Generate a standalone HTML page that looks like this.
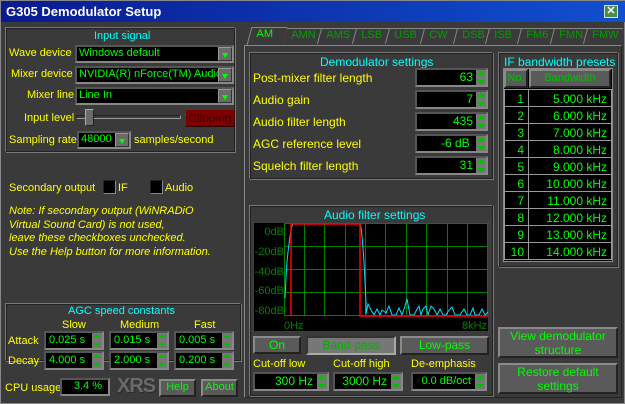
<!DOCTYPE html>
<html><head><meta charset="utf-8"><style>
*{box-sizing:border-box;margin:0;padding:0}
body{width:625px;height:404px;background:#3a3a3a;font-family:"Liberation Sans",sans-serif;font-size:11px;position:relative;overflow:hidden;border:1px solid #888}
.a{position:absolute;white-space:nowrap}
.y{color:#ffff00}.c{color:#00ffff}.g{color:#00ff00}
.box{position:absolute;border:1px solid #777;border-right-color:#222;border-bottom-color:#222;box-shadow:inset 1px 1px 0 #222,1px 1px 0 #777}
.blk{position:absolute;background:#000;border:2px solid #555;border-right-color:#888;border-bottom-color:#888;color:#00ff00;font-size:11px;line-height:13px;white-space:nowrap;overflow:hidden}
.dd{position:absolute;right:0;top:0;width:14px;height:100%;background:#6a6a6a;border:1px solid #999;border-right-color:#333;border-bottom-color:#333}
.dd:after{content:"";position:absolute;left:3px;top:5px;border-left:3px solid transparent;border-right:3px solid transparent;border-top:5px solid #00ff00}
.sp{position:absolute;right:0;top:0;width:10px;height:100%;background:#777}
.sp:before{content:"";position:absolute;left:1px;top:1px;border-left:4px solid transparent;border-right:4px solid transparent;border-bottom:4px solid #00c000}
.sp:after{content:"";position:absolute;left:1px;bottom:1px;border-left:4px solid transparent;border-right:4px solid transparent;border-top:4px solid #00c000}
.btn{position:absolute;background:#5a5a5a;border:2px solid #8a8a8a;border-right-color:#222;border-bottom-color:#222;color:#00ff00;text-align:center;font-size:12px}
.tab{position:absolute;top:27px;height:16px;color:#00a000;font-size:11px;padding-left:6px;border-top:1px solid #888;border-left:1px solid #888;transform:skewX(-15deg);white-space:nowrap}
.tab span{display:inline-block;transform:skewX(15deg)}
.r{text-align:right;padding-right:13px}
</style></head><body>
<div class="a" style="left:0;top:0;width:625px;height:21px;background:linear-gradient(90deg,#0a1a90,#1050d0);color:#fff;font-weight:bold;font-size:13px;line-height:21px;padding-left:5px">G305 Demodulator Setup</div>
<div class="a" style="left:603px;top:4px;width:14px;height:13px;background:#4a8a4a;border:1px solid #ddd;color:#fff;font-size:11px;line-height:11px;text-align:center;font-weight:bold">✕</div>

<div class="box" style="left:4px;top:26px;width:230px;height:125px"></div>
<div class="a c" style="left:93px;top:29px">Input signal</div>
<div class="a y" style="left:8px;top:46px">Wave device</div>
<div class="blk" style="left:74px;top:44px;width:159px;height:18px;padding-left:2px">Windows default<div class="dd"></div></div>
<div class="a y" style="left:10px;top:67px">Mixer device</div>
<div class="blk" style="left:74px;top:65px;width:159px;height:18px;padding-left:2px">NVIDIA(R) nForce(TM) Audio<div class="dd"></div></div>
<div class="a y" style="left:26px;top:88px">Mixer line</div>
<div class="blk" style="left:74px;top:86px;width:159px;height:18px;padding-left:2px">Line In<div class="dd"></div></div>
<div class="a y" style="left:23px;top:111px">Input level</div>
<div class="a" style="left:75px;top:114px;width:105px;height:4px;border:1px solid #222;border-right-color:#999;border-bottom-color:#999"></div>
<div class="a" style="left:84px;top:108px;width:9px;height:17px;background:#6a6a6a;border:1px solid #aaa;border-right-color:#222;border-bottom-color:#222"></div>
<div class="a" style="left:184px;top:108px;width:50px;height:18px;background:#800000;border:1px solid #c00;border-right-color:#300;border-bottom-color:#300;color:#400;font-size:12px;text-align:center;line-height:16px">Clipping</div>
<div class="a y" style="left:8px;top:133px">Sampling rate</div>
<div class="blk" style="left:76px;top:130px;width:54px;height:18px;padding-left:2px">48000<div class="dd"></div></div>
<div class="a y" style="left:133px;top:133px">samples/second</div>

<div class="a y" style="left:8px;top:181px">Secondary output</div>
<div class="a" style="left:102px;top:179px;width:13px;height:14px;background:#000;border:1px solid #888;border-top-color:#222;border-left-color:#222"></div>
<div class="a y" style="left:117px;top:181px">IF</div>
<div class="a" style="left:149px;top:179px;width:13px;height:14px;background:#000;border:1px solid #888;border-top-color:#222;border-left-color:#222"></div>
<div class="a y" style="left:164px;top:181px">Audio</div>
<div class="a y" style="left:8px;top:204px;font-style:italic;line-height:13.5px;font-size:11px">Note: If secondary output (WiNRADiO<br>Virtual Sound Card) is not used,<br>leave these checkboxes unchecked.<br>Use the Help button for more information.</div>

<div class="box" style="left:4px;top:302px;width:236px;height:58px"></div>
<div class="a c" style="left:67px;top:304px">AGC speed constants</div>
<div class="a y" style="left:61px;top:318px">Slow</div>
<div class="a y" style="left:119px;top:318px">Medium</div>
<div class="a y" style="left:193px;top:318px">Fast</div>
<div class="a y" style="left:7px;top:334px">Attack</div>
<div class="a y" style="left:7px;top:354px">Decay</div>
<div class="blk" style="left:43px;top:330px;width:60px;height:19px;padding:1px 3px">0.025 s<div class="sp"></div></div>
<div class="blk" style="left:108px;top:330px;width:60px;height:19px;padding:1px 3px">0.015 s<div class="sp"></div></div>
<div class="blk" style="left:173px;top:330px;width:60px;height:19px;padding:1px 3px">0.005 s<div class="sp"></div></div>
<div class="blk" style="left:43px;top:350px;width:60px;height:19px;padding:1px 3px">4.000 s<div class="sp"></div></div>
<div class="blk" style="left:108px;top:350px;width:60px;height:19px;padding:1px 3px">2.000 s<div class="sp"></div></div>
<div class="blk" style="left:173px;top:350px;width:60px;height:19px;padding:1px 3px">0.200 s<div class="sp"></div></div>
<div class="a y" style="left:4px;top:381px">CPU usage</div>
<div class="blk" style="left:59px;top:377px;width:50px;height:18px;text-align:right;padding-right:6px">3.4 %</div>
<div class="a" style="left:116px;top:374px;color:#6a6a6a;font-size:20px;font-weight:bold;letter-spacing:-1px;text-shadow:1px 1px 0 #2a2a2a">XRS</div>
<div class="btn" style="left:158px;top:378px;width:37px;height:18px;line-height:13px;font-size:11px">Help</div>
<div class="btn" style="left:200px;top:378px;width:37px;height:18px;line-height:13px;font-size:11px">About</div>

<!-- tabs -->
<div class="a" style="left:243px;top:44px;width:378px;height:353px;border:1px solid #888;border-right-color:#222;border-bottom-color:#222"></div>
<div class="tab" style="left:248px;width:36px;top:26px;height:18px;color:#00ff00;background:#3a3a3a;z-index:2"><span>AM</span></div>
<div class="tab" style="left:283px;width:36px"><span>AMN</span></div>
<div class="tab" style="left:318px;width:36px"><span>AMS</span></div>
<div class="tab" style="left:353px;width:34px"><span>LSB</span></div>
<div class="tab" style="left:386px;width:36px"><span>USB</span></div>
<div class="tab" style="left:421px;width:34px"><span>CW</span></div>
<div class="tab" style="left:454px;width:33px"><span>DSB</span></div>
<div class="tab" style="left:486px;width:33px"><span>ISB</span></div>
<div class="tab" style="left:518px;width:34px"><span>FM6</span></div>
<div class="tab" style="left:551px;width:34px"><span>FMN</span></div>
<div class="tab" style="left:584px;width:36px"><span>FMW</span></div>

<div class="box" style="left:248px;top:51px;width:244px;height:127px"></div>
<div class="a c" style="left:319px;top:54px;font-size:12px">Demodulator settings</div>
<div class="a y" style="left:252px;top:70px;font-size:12px">Post-mixer filter length</div>
<div class="a y" style="left:252px;top:92px;font-size:12px">Audio gain</div>
<div class="a y" style="left:252px;top:114px;font-size:12px">Audio filter length</div>
<div class="a y" style="left:252px;top:136px;font-size:12px">AGC reference level</div>
<div class="a y" style="left:252px;top:158px;font-size:12px">Squelch filter length</div>
<div class="blk r" style="left:414px;top:67px;width:73px;height:19px;font-size:12px;line-height:15px">63<div class="sp"></div></div>
<div class="blk r" style="left:414px;top:89px;width:73px;height:19px;font-size:12px;line-height:15px">7<div class="sp"></div></div>
<div class="blk r" style="left:414px;top:111px;width:73px;height:19px;font-size:12px;line-height:15px">435<div class="sp"></div></div>
<div class="blk r" style="left:414px;top:133px;width:73px;height:19px;font-size:12px;line-height:15px">-6 dB&nbsp;<div class="sp"></div></div>
<div class="blk r" style="left:414px;top:155px;width:73px;height:19px;font-size:12px;line-height:15px">31<div class="sp"></div></div>

<div class="box" style="left:497px;top:51px;width:120px;height:215px"></div>
<div class="a c" style="left:503px;top:54px;font-size:12px">IF bandwidth presets</div>
<div class="a" style="left:502px;top:67px;width:110px;height:194px;background:#000;border:1px solid #888"></div>
<div class="btn" style="left:503px;top:68px;width:24px;height:19px;font-size:11px;line-height:15px;color:#00c000">No.</div>
<div class="btn" style="left:528px;top:68px;width:82px;height:19px;font-size:11px;line-height:15px;color:#00c000">Bandwidth</div>
<div class="a" style="left:503px;top:88px;width:108px">
<svg width="108" height="172" style="position:absolute;left:0;top:0">
<g stroke="#999" fill="none"><rect x="0.5" y="0.5" width="107" height="170"/><line x1="24.5" y1="0" x2="24.5" y2="171"/>
<line x1="0" y1="17.5" x2="108" y2="17.5"/><line x1="0" y1="34.5" x2="108" y2="34.5"/><line x1="0" y1="51.5" x2="108" y2="51.5"/><line x1="0" y1="68.5" x2="108" y2="68.5"/><line x1="0" y1="85.5" x2="108" y2="85.5"/><line x1="0" y1="102.5" x2="108" y2="102.5"/><line x1="0" y1="119.5" x2="108" y2="119.5"/><line x1="0" y1="136.5" x2="108" y2="136.5"/><line x1="0" y1="153.5" x2="108" y2="153.5"/></g>
<g fill="#00ff00" font-family="Liberation Sans" font-size="12" text-anchor="end">
<text x="20" y="14">1</text><text x="20" y="31">2</text><text x="20" y="48">3</text><text x="20" y="65">4</text><text x="20" y="82">5</text><text x="20" y="99">6</text><text x="20" y="116">7</text><text x="20" y="133">8</text><text x="20" y="150">9</text><text x="20" y="167">10</text>
<text x="103" y="14">5.000  kHz</text><text x="103" y="31">6.000  kHz</text><text x="103" y="48">7.000  kHz</text><text x="103" y="65">8.000  kHz</text><text x="103" y="82">9.000  kHz</text><text x="103" y="99">10.000  kHz</text><text x="103" y="116">11.000  kHz</text><text x="103" y="133">12.000  kHz</text><text x="103" y="150">13.000  kHz</text><text x="103" y="167">14.000  kHz</text></g></svg></div>

<div class="box" style="left:248px;top:204px;width:244px;height:191px"></div>
<div class="a c" style="left:323px;top:207px;font-size:12px">Audio filter settings</div>
<svg class="a" style="left:252px;top:221px" width="236" height="110">
<rect x="0" y="0" width="236" height="110" fill="#000" stroke="#777"/>
<g stroke="#008000" fill="none"><rect x="31.5" y="1.5" width="203" height="92"/>
<path d="M51.5 2V94M71.5 2V94M92.5 2V94M112.5 2V94M132.5 2V94M153.5 2V94M173.5 2V94M194.5 2V94M214.5 2V94M32 24.5H235M32 47.5H235M32 70.5H235"/></g>
<g fill="#008000" font-family="Liberation Sans" font-size="11" text-anchor="end"><text x="31" y="13">0dB</text><text x="31" y="33">-20dB</text><text x="31" y="53">-40dB</text><text x="31" y="72">-60dB</text><text x="31" y="92">-80dB</text></g>
<g fill="#008000" font-family="Liberation Sans" font-size="11"><text x="31" y="107">0Hz</text><text x="209" y="107">8kHz</text></g>
<path d="M32 76L33 56L34 40L35 30L36 22L37 15L38 8L39 4L40 2L107 2L108 6L109 14L110 26L111 40L112 60L113 80L113 92L115 82L118 88L121 93L124 87L127 93L129 88L133 91L136 84L139 93L143 93L146 86L149 93L152 84L154 77L157 93L161 93L164 87L166 84L168 93L170 87L173 84L175 93L178 84L181 87L184 93L187 87L190 93L193 93L196 88L199 85L202 93L207 93L211 87L214 93L217 93L220 86L222 93L226 93L229 87L232 93L235 90" stroke="#00e0ff" fill="none"/>
<path d="M38 94V2H107V94H235" stroke="#ff0000" fill="none" stroke-width="1.5"/>
</svg>
<div class="btn" style="left:252px;top:335px;width:48px;height:18px;font-size:12px;line-height:14px">On</div>
<div class="btn" style="left:305px;top:335px;width:90px;height:19px;background:#777;border-color:#333 #aaa #aaa #333;font-size:12px;line-height:14px;color:#00b000">Band-pass</div>
<div class="btn" style="left:399px;top:335px;width:89px;height:19px;font-size:12px;line-height:14px">Low-pass</div>
<div class="a y" style="left:252px;top:357px">Cut-off low</div>
<div class="a y" style="left:332px;top:357px">Cut-off high</div>
<div class="a y" style="left:410px;top:357px">De-emphasis</div>
<div class="blk r" style="left:252px;top:371px;width:76px;height:19px;font-size:12px;line-height:15px;padding-right:14px">300 Hz<div class="sp"></div></div>
<div class="blk r" style="left:332px;top:371px;width:70px;height:19px;font-size:12px;line-height:15px;padding-right:14px">3000 Hz<div class="sp"></div></div>
<div class="blk r" style="left:410px;top:371px;width:76px;height:19px;font-size:11px;line-height:15px;padding-right:14px">0.0 dB/oct<div class="sp"></div></div>

<div class="btn" style="left:497px;top:326px;width:120px;height:31px;font-size:12px;line-height:14px">View demodulator<br>structure</div>
<div class="btn" style="left:497px;top:362px;width:120px;height:31px;font-size:12px;line-height:14px">Restore default<br>settings</div>
</body></html>
